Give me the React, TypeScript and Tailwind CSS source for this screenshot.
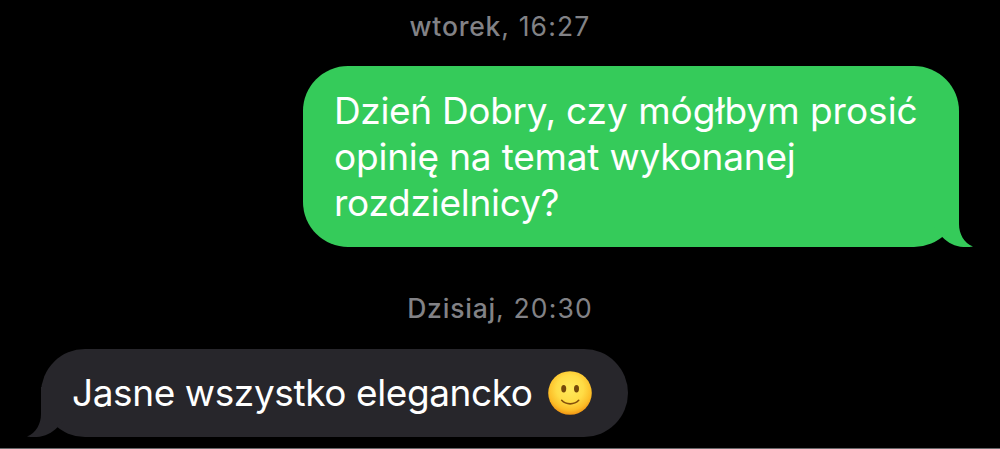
import React from 'react';

interface TimestampProps {
  day: string;
  time: string;
  className?: string;
}

const Timestamp: React.FC<TimestampProps> = ({ day, time, className = '' }) => (
  <div className={`flex justify-center whitespace-pre text-[26.5px] leading-[32px] text-[#828286] ${className}`}>
    <span className="font-medium tracking-[0.8px]">{day}</span>
    <span className="tracking-[1.15px]">, {time}</span>
  </div>
);

interface BubbleProps {
  side: 'in' | 'out';
  className?: string;
  children: React.ReactNode;
}

const Bubble: React.FC<BubbleProps> = ({ side, className = '', children }) => {
  const color = side === 'out' ? 'bg-[#35cb5a] text-[#35cb5a]' : 'bg-[#27262b] text-[#27262b]';
  const tail = side === 'out' ? '-right-[14px]' : '-left-[14px] -scale-x-100';

  return (
    <div className={`relative rounded-[45px] ${color} ${className}`}>
      <svg className={`absolute bottom-0 ${tail}`} width="59" height="50" viewBox="0 0 59 50" fill="currentColor">
        <path d="M20 0H45V27C45 37 50 46 59 49.6C46 51.5 36 48 28.5 40.2L20 30Z" />
      </svg>
      <div className="relative text-white">{children}</div>
    </div>
  );
};

const Smile: React.FC = () => (
  <svg className="shrink-0" width="44" height="44" viewBox="0 0 44 44" fill="none">
    <defs>
      <radialGradient id="face" cx="0.5" cy="0.4" r="0.62">
        <stop offset="0" stopColor="#ffe95c" />
        <stop offset="0.5" stopColor="#ffdc45" />
        <stop offset="0.8" stopColor="#fcbd27" />
        <stop offset="1" stopColor="#ee8d10" />
      </radialGradient>
    </defs>
    <circle cx="22" cy="22" r="21.8" fill="url(#face)" />
    <ellipse cx="15.7" cy="17.7" rx="2.5" ry="3.7" fill="#75480a" />
    <ellipse cx="28.5" cy="17.7" rx="2.5" ry="3.7" fill="#75480a" />
    <path d="M13.7 29.3C18 34 26.3 34 30.7 29.3" stroke="#85500b" strokeWidth="1.6" strokeLinecap="round" />
  </svg>
);

export default function App() {
  return (
    <div className="flex h-[449px] w-[1000px] flex-col overflow-hidden border-b border-[#68686a] bg-black font-['Inter',sans-serif]">
      <Timestamp day="wtorek" time="16:27" className="mt-[10px]" />

      <Bubble side="out" className="mt-[24px] mr-[41px] h-[181px] w-[656px] self-end pt-[22px] pl-[31px]">
        <div className="whitespace-nowrap text-[37px] leading-[46px]">
          <p>
            <span className="tracking-[-0.33px]">Dzień Dobry, </span>czy mógłbym prosić
          </p>
          <p className="tracking-[-0.2px]">opinię na temat wykonanej</p>
          <p className="tracking-[-0.25px]">rozdzielnicy?</p>
        </div>
      </Bubble>

      <Timestamp day="Dzisiaj" time="20:30" className="mt-[45px]" />

      <Bubble side="in" className="mt-[25px] ml-[41px] h-[88px] w-[587px] pt-[21px] pl-[31px]">
        <div className="flex items-center gap-[15px]">
          <p className="w-[461px] whitespace-nowrap text-[37px] leading-[46px] tracking-[-0.4px]">Jasne wszystko elegancko</p>
          <Smile />
        </div>
      </Bubble>
    </div>
  );
}
